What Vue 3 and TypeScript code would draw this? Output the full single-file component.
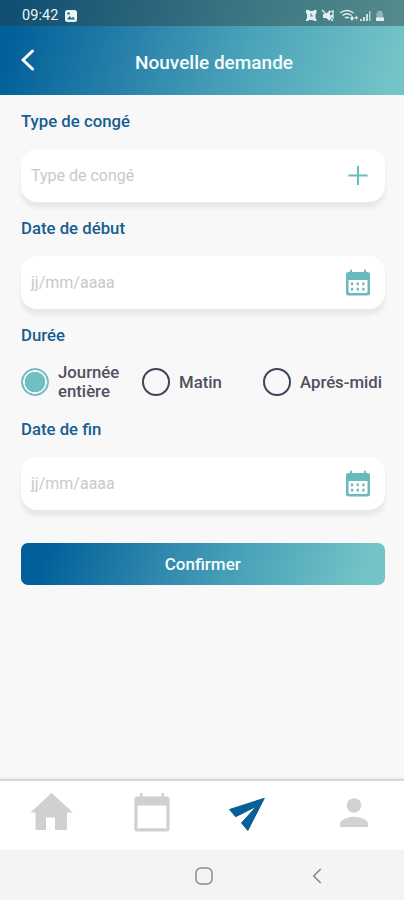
<script setup lang="ts">
import { ref } from 'vue'

type Duration = 'day' | 'morning' | 'afternoon'

const duration = ref<Duration>('day')
const durations: { id: Duration; label: string }[] = [
  { id: 'day', label: 'Journée entière' },
  { id: 'morning', label: 'Matin' },
  { id: 'afternoon', label: 'Aprés-midi' },
]
</script>

<template>
  <div class="screen">
    <header class="header">
      <div class="status">
        <div class="status-left">
          <span class="time">09:42</span>
          <svg class="photo" viewBox="0 0 12 12">
            <rect width="12" height="12" rx="2.5" fill="#e9f4f7" />
            <path d="M2 9.500 4.600 6l2 2.200L8 6.800l2.200 2.700z" fill="#2a667f" />
            <path d="M2.300 2.500h2.500v2H2.300z" fill="#2a667f" />
          </svg>
        </div>
        <svg class="status-icons" viewBox="0 0 80 14">
          <g fill="#e3f0f1">
            <path d="M1 1h3l1 1h3l1-1h2.500v3l-1 1v4l1 2v1H9l-1-1H4l-1 1H1v-1l1-2V5L1 4z" />
            <path d="M18 5h3l4-4v11l-4-3h-3z" />
            <path d="M71.500 4h1V2h4.500v2h1v8h-6.500z" opacity=".45" />
            <path d="M71 8.500h8V12h-8z" />
            <path d="M55 10h2v2h-2zM58 8h2v4h-2zM61 5h2v7h-2z" opacity=".85" />
            <path d="M64 2h1.500v10H64z" opacity=".7" />
            <path d="m45 9 2-2 2 2-2 3zM49.500 8H51V6.500l2 2.200-2 2.300v-1.500h-1.500z" />
          </g>
          <g fill="none" stroke="#e3f0f1" stroke-width="1.300">
            <path d="m17 1 11 11M25 3l3-1v4l-3 1M25 9l3-3v4" />
            <path d="M35 4q7-5 13.500 0M37.500 6.500q4.500-3.500 9 0M40 9q2-1.500 4 0" />
          </g>
          <path d="M6 4.500V7h2" fill="none" stroke="#4d8993" stroke-width="1.200" />
        </svg>
      </div>
      <div class="title-bar">
        <svg class="back" viewBox="0 0 14 22">
          <path d="M12.500 2 3 11l9.500 9" fill="none" stroke="#fff" stroke-width="3" stroke-linecap="round" stroke-linejoin="round" />
        </svg>
        <h1>Nouvelle demande</h1>
      </div>
    </header>

    <main class="form">
      <h2>Type de congé</h2>
      <div class="field">
        <span>Type de congé</span>
        <svg class="icon" viewBox="0 0 26 28">
          <path d="M13 4v19M3.500 13.500h19" fill="none" stroke="#65bcc1" stroke-width="2" />
        </svg>
      </div>

      <h2>Date de début</h2>
      <div class="field">
        <span>jj/mm/aaaa</span>
        <svg class="icon" viewBox="0 0 26 28">
          <path fill-rule="evenodd" d="M5 1.500Q5 .5 6 .5t1 1V3h12V1.500q0-1 1-1t1 1V3h1.500Q25 3 25 5v19q0 2.500-2.500 2.500h-19Q1 26.500 1 24V5q0-2 2.500-2H5zM3.500 11v11.500q0 1.500 1.500 1.500h16q1.500 0 1.500-1.500V11z" fill="#69babf" />
          <path d="M6 13.500h2.200v2.700H6zm5.600 0h2.200v2.700h-2.200zm5.700 0h2.200v2.700h-2.200zM6 18.800h2.200v2.700H6zm5.600 0h2.200v2.700h-2.200zm5.700 0h2.200v2.700h-2.200z" fill="#75b0b4" />
        </svg>
      </div>

      <h2>Durée</h2>
      <div class="radios">
        <label v-for="item in durations" :key="item.id" class="option" :class="item.id" @click="duration = item.id">
          <span class="radio" :class="{ checked: duration === item.id }"></span>
          <span class="option-label">{{ item.label }}</span>
        </label>
      </div>

      <h2>Date de fin</h2>
      <div class="field">
        <span>jj/mm/aaaa</span>
        <svg class="icon" viewBox="0 0 26 28">
          <path fill-rule="evenodd" d="M5 1.500Q5 .5 6 .5t1 1V3h12V1.500q0-1 1-1t1 1V3h1.500Q25 3 25 5v19q0 2.500-2.500 2.500h-19Q1 26.500 1 24V5q0-2 2.500-2H5zM3.500 11v11.500q0 1.500 1.500 1.500h16q1.500 0 1.500-1.500V11z" fill="#69babf" />
          <path d="M6 13.500h2.200v2.700H6zm5.600 0h2.200v2.700h-2.200zm5.700 0h2.200v2.700h-2.200zM6 18.800h2.200v2.700H6zm5.600 0h2.200v2.700h-2.200zm5.700 0h2.200v2.700h-2.200z" fill="#75b0b4" />
        </svg>
      </div>

      <button class="confirm"><span>Confirmer</span></button>
    </main>

    <nav class="tabs">
      <svg viewBox="0 0 101 69">
        <path d="M51.500 12 73 31.500h-6V49H55V36.500h-9V49H35.500V31.500h-5z" fill="#d0d0d0" />
      </svg>
      <svg viewBox="0 0 101 69">
        <path fill-rule="evenodd" d="M39 12h2.500v3.500h19V12H63v3.500h2.500q3 0 3 3v29q0 3-3 3H36.300q-3 0-3-3v-29q0-3 3-3H39zM36.500 24.500v22.700h29V24.500z" fill="#d0d0d0" />
      </svg>
      <svg viewBox="0 0 101 69">
        <path d="M62.300 17.300 27.500 28.500l6.200 7.200L54.500 25.300 39.500 41.900l6.300 7.600z" fill="#075f98" stroke="#075f98" stroke-linejoin="round" />
      </svg>
      <svg viewBox="0 0 101 69">
        <circle cx="51" cy="24.500" r="7.300" fill="#d2d2d2" />
        <path d="M37 46v-3q0-3 4-5 5-2.500 10-2.500T61 38q4 2 4 5v3z" fill="#d2d2d2" />
      </svg>
    </nav>
    <footer class="system">
      <svg class="home-key" viewBox="0 0 18 18">
        <rect x="1" y="1" width="16" height="16" rx="5" fill="none" stroke="#8c8c8c" stroke-width="1.500" />
      </svg>
      <svg class="back-key" viewBox="0 0 10 16">
        <path d="M8.700 1 1.700 8l7 7" fill="none" stroke="#858585" stroke-width="1.500" />
      </svg>
    </footer>
  </div>
</template>

<style>
body {
  margin: 0;
}
</style>

<style scoped>
.screen {
  display: flex;
  flex-direction: column;
  width: 404px;
  height: 900px;
  overflow: hidden;
  background: #f8f8f8;
  font-family: Roboto, "Liberation Sans", sans-serif;
}
.header {
  height: 95px;
  flex: none;
  background: linear-gradient(107deg, #01609a 5%, #2b83ab 35%, #4ba3b9 61%, #73c4c7 96%);
}
.status {
  display: flex;
  justify-content: space-between;
  box-sizing: border-box;
  height: 26px;
  padding: 8px 19px 0 22px;
  background: rgba(45, 55, 50, 0.4);
}
.status-left {
  display: flex;
  gap: 6px;
}
.time {
  color: #e9f4f7;
  font-size: 14.5px;
  font-weight: 400;
  letter-spacing: 0.1px;
  line-height: 15px;
}
.photo {
  width: 12px;
  height: 12px;
  margin-top: 2px;
}
.status-icons {
  width: 80px;
  height: 14px;
  margin-top: 1px;
}
.title-bar {
  display: flex;
  align-items: center;
  height: 69px;
  padding-left: 20px;
}
.back {
  width: 14px;
  height: 22px;
  margin-bottom: 1px;
}
h1 {
  margin: 5px 0 0 101px;
  color: #f5fcfd;
  font-size: 19px;
  font-weight: 500;
  line-height: 24px;
  white-space: nowrap;
}
.form {
  display: flex;
  flex-direction: column;
  flex: 1;
  padding: 16px 19.5px 0 21px;
}
h2 {
  height: 22px;
  margin: 0;
  color: #175d91;
  font-size: 16.75px;
  font-weight: 500;
  line-height: 20px;
  white-space: nowrap;
}
.field {
  display: flex;
  justify-content: space-between;
  align-items: center;
  box-sizing: border-box;
  height: 53px;
  margin: 16px 0;
  padding: 0 13.5px 0 10px;
  border-radius: 16px;
  background: #fff;
  box-shadow: 0 6px 4px rgba(0, 0, 0, 0.065);
  color: #c9c9c9;
  font-size: 16px;
}
.icon {
  width: 26px;
  height: 28px;
}
.radios {
  display: grid;
  grid-template-columns: 121px 121px 1fr;
  align-items: center;
  height: 48px;
  margin: 11px 0 13px;
}
.option {
  display: flex;
  align-items: center;
  gap: 9px;
  color: #50505f;
  font-size: 16.75px;
  font-weight: 500;
  line-height: 19px;
  white-space: nowrap;
}
.day .option-label {
  width: 70px;
  white-space: normal;
}
.radio {
  box-sizing: border-box;
  flex: none;
  width: 28px;
  height: 28px;
  border: 2px solid #42425d;
  border-radius: 50%;
}
.radio.checked {
  border: 1.5px solid #6bb5bb;
  background: radial-gradient(circle, #70bfc4 0 10px, #f1f9f9 10.5px 11.5px, #86c3c9 12px);
}
.confirm {
  height: 42px;
  margin: 17px 0 0;
  padding: 0;
  border: 0;
  border-radius: 7px;
  background: linear-gradient(107deg, #01609a 7%, #2b83ab 35%, #4ba3b9 61%, #73c4c7 94%);
  color: #f5fcfd;
  font-family: inherit;
  font-size: 17px;
  font-weight: 500;
}
.tabs {
  display: grid;
  grid-template-columns: repeat(4, 101px);
  flex: none;
  height: 69px;
  border-top: 2px solid #d9d9d9;
  background: #fff;
  box-shadow: 0 -1px 2px rgba(0, 0, 0, 0.07);
}
.tabs svg {
  width: 101px;
  height: 69px;
}
.system {
  display: flex;
  align-items: center;
  flex: none;
  gap: 99px;
  height: 50px;
  box-sizing: border-box;
  padding: 2px 0 0 195px;
  background: #f4f4f4;
}
.home-key {
  width: 18px;
  height: 18px;
}
.back-key {
  width: 10px;
  height: 16px;
}
</style>
